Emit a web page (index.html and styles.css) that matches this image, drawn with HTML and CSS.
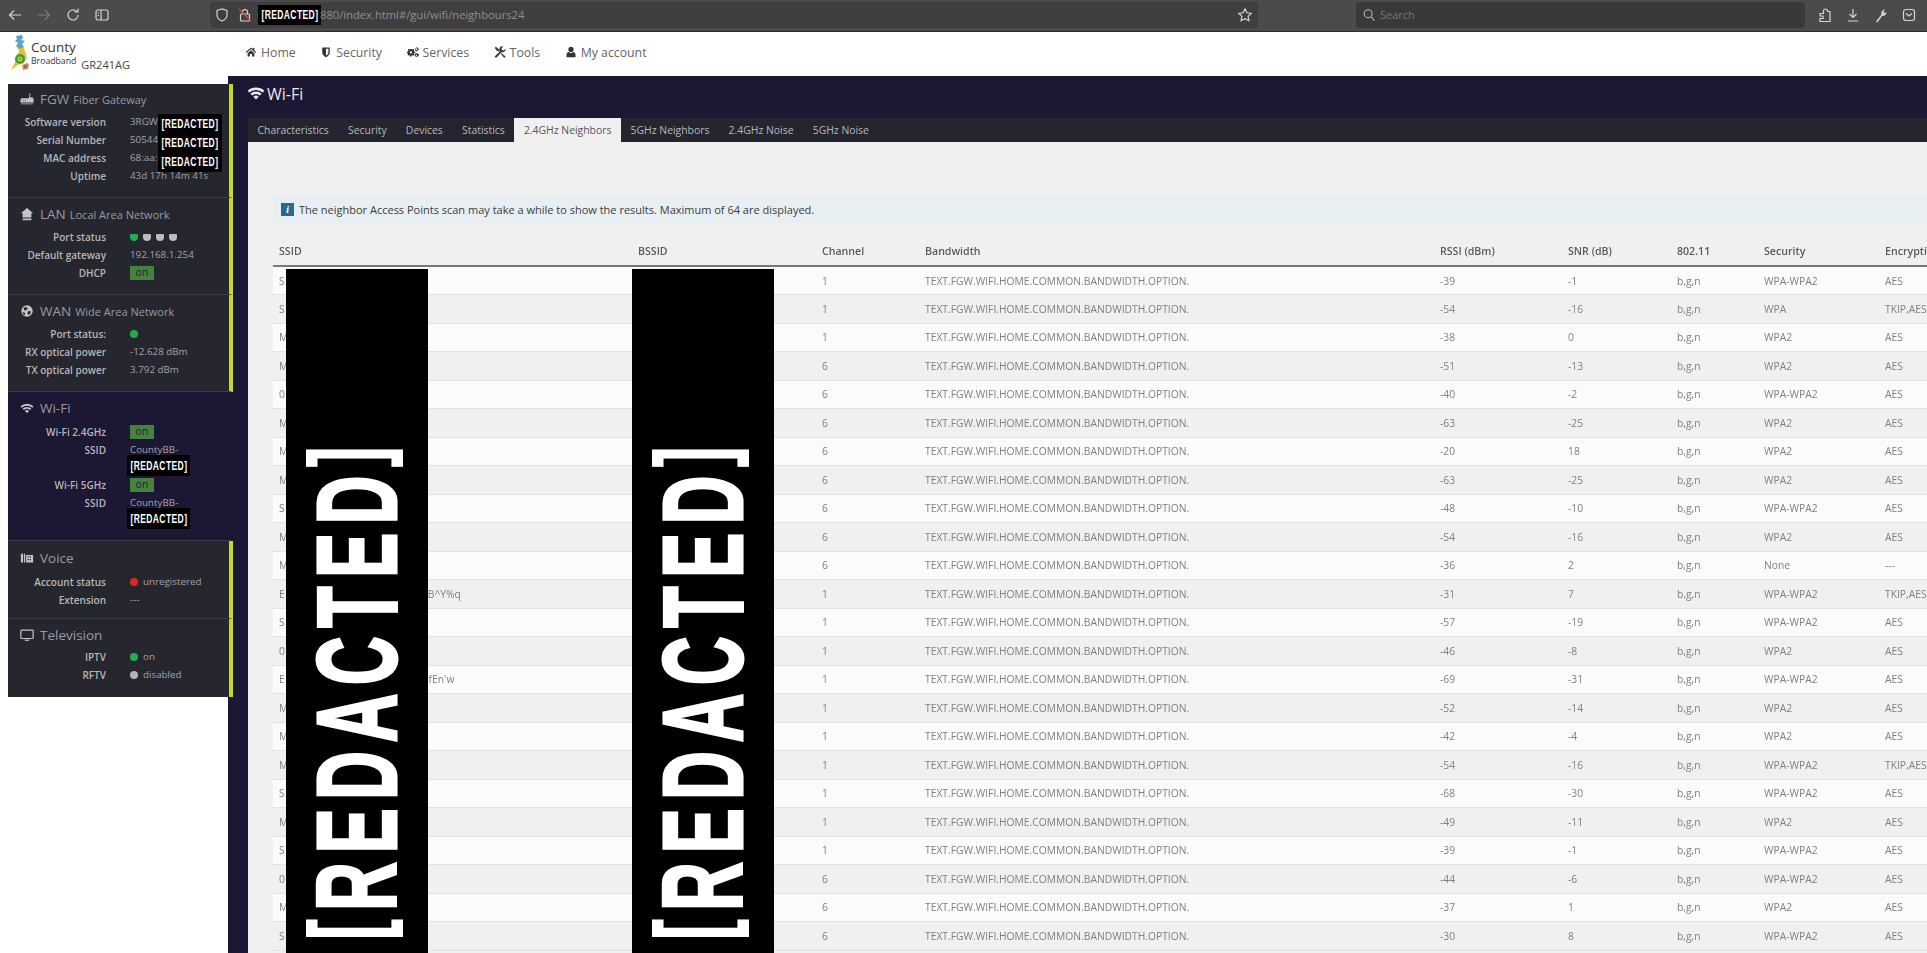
FILE: index.html
```html
<!DOCTYPE html>
<html lang="en">
<head>
<meta charset="utf-8">
<title>Wi-Fi</title>
<link rel="stylesheet" href="styles.css">
</head>
<body>
<header class="chrome">
  <div class="chrome-nav">
    <svg class="ci" viewBox="0 0 16 16"><path d="M14 8H3M7 3.500 2.500 8 7 12.500"/></svg>
    <svg class="ci ci-dim" viewBox="0 0 16 16"><path d="M2 8h11M9 3.500 13.500 8 9 12.500"/></svg>
    <svg class="ci" viewBox="0 0 16 16"><path d="M13 8a5 5 0 1 1-1.600-3.700M13 1.500v3.400H9.600"/></svg>
    <svg class="ci" viewBox="0 0 16 16"><rect x="2" y="3" width="12" height="10" rx="2"/><path d="M7 3v10M3.500 6H5M3.500 8.500H5"/></svg>
  </div>
  <div class="urlbar">
    <svg class="ci ci-url" viewBox="0 0 16 16"><path d="M8 2 3 3.500V8c0 3 2.500 5 5 6 2.500-1 5-3 5-6V3.500z"/></svg>
    <svg class="ci ci-lock" viewBox="0 0 16 16"><rect x="3.500" y="7" width="9" height="7" rx="1"/><path d="M5.500 7V5a2.500 2.500 0 0 1 5 0v2"/><path class="slash" d="M2 2l12 12"/></svg>
    <span class="redact redact-url"><span class="rt">[REDACTED]</span></span>
    <span class="url-text">880/index.html#/gui/wifi/neighbours24</span>
    <svg class="ci ci-star" viewBox="0 0 16 16"><path d="m8 1.800 1.900 4 4.300.6-3.100 3 .8 4.300L8 11.600l-3.900 2.100.8-4.300-3.100-3 4.300-.6z"/></svg>
  </div>
  <div class="searchbar">
    <svg class="ci ci-search" viewBox="0 0 16 16"><circle cx="7" cy="6.500" r="4.500"/><path d="m10.500 10 3.500 4.500"/></svg>
    <span class="search-text">Search</span>
  </div>
  <div class="chrome-tools">
    <svg class="ci" viewBox="0 0 16 16"><path d="M3 6.500h3.500V4a2 2 0 0 1 4 0v.5H13v10H3v-3h3V9H3z"/></svg>
    <svg class="ci" viewBox="0 0 16 16"><path d="M8 2v8.500M4.500 7 8 10.500 11.500 7M3 14h10"/></svg>
    <svg class="ci ci-fill" viewBox="0 0 16 16"><path d="M3 14.500 8.500 7.500c-.8-2.500.8-5 3.500-5l-1.500 2 1 1.500 2-.8c0 2.500-2.200 4.300-4.500 3.800L4.500 15.500z"/></svg>
    <svg class="ci" viewBox="0 0 16 16"><rect x="2.500" y="2.500" width="11" height="11" rx="2.500"/><path d="m5 6.500 3 2.500 3-2.500"/></svg>
  </div>
</header>

<div class="topnav">
  <div class="brand">
    <svg class="logo" viewBox="0 0 20 36">
      <path class="lg-a" d="M8 12l5-1 2 5 2 6-3 6-6 2-7 5 4-8 1-6 3-4z"/>
      <path class="lg-b" d="M6 1l6-1 1 3-2 2 4 1-3 3 2 3-5 2-3-3 2-3-3-2 2-2z"/>
      <circle class="lg-c" cx="10" cy="24" r="5"/>
      <circle class="lg-d" cx="10" cy="24" r="2.500"/>
      <circle class="lg-c" cx="10" cy="24" r="1"/>
      <path class="lg-e" d="M12 30l5-2 2 1-1 5-5 1z"/>
      <path class="lg-f" d="M14 30h3v3h-3z"/>
    </svg>
    <div class="brand-name">
      <span class="brand-county">County</span>
      <span class="brand-bb">Broadband</span>
    </div>
    <span class="brand-model">GR241AG</span>
  </div>
  <nav class="menu">
    <a class="menu-item"><svg class="ni" viewBox="0 0 16 16"><path d="M8 2 1 8l1 1.200L8 4l6 5.200L15 8l-2.500-2.100V2.500h-2v1.700zM3.500 9.500V14h3v-3.500h3V14h3V9.500L8 5.500z"/></svg>Home</a>
    <a class="menu-item"><svg class="ni" viewBox="0 0 16 16"><path d="M3 2h10v6.500c0 3-2.500 5-5 6.500-2.500-1.500-5-3.500-5-6.500zm5 1.800V12.800c1.600-1 3.200-2.500 3.200-4.300V3.800z"/></svg>Security</a>
    <a class="menu-item"><svg class="ni" viewBox="0 0 16 16"><path d="M6 4l1.500.6 1.200-.8 1 1-.7 1.200.5 1.300 1.500.4v1.500l-1.500.3-.5 1.300.7 1.200-1 1-1.200-.7-1.300.5-.3 1.400H4.500l-.4-1.400-1.200-.5-1.200.7-1-1 .7-1.200-.5-1.300L0 9.200V7.700l1.400-.4.500-1.300-.7-1.200 1-1 1.200.8L4.500 4zm-.7 3a1.500 1.500 0 1 0 0 3 1.500 1.500 0 0 0 0-3z"/><path d="M12.500 1l.5 1 1.100.1.500 1 1 .4v1.200l-1 .5-.4 1-.5.9-1.200 0-.9-.6-1-.4V4.500l.3-1.100.6-.8 1-.4zm0 2a1.200 1.200 0 1 0 0 2.400 1.200 1.200 0 0 0 0-2.400zM12.500 9.500l.9.500 1-.1.600 1 1 .5v1.100l-1 .5-.5 1-1.100.2-.9.500-1-.6-.7-.9-.8-.7.100-1.100.8-.7.600-1zm0 2a1 1 0 1 0 0 2 1 1 0 0 0 0-2z"/></svg>Services</a>
    <a class="menu-item"><svg class="ni" viewBox="0 0 16 16"><path d="M15.500 3.800a4 4 0 0 1-5.300 4.300L3.800 15a1.500 1.500 0 0 1-2.600-1.300l6.900-6.600A4 4 0 0 1 12.300.6L10 3l.6 2.300 2.300.6zM1 2.500 2.500 1l4 3.200v1.300l1.300 1.300-1.100 1-1.300-1.300H4.200z"/><path d="m9.600 9.300 5.300 4.200a1.300 1.300 0 0 1-1.800 1.800L8.800 10z"/></svg>Tools</a>
    <a class="menu-item"><svg class="ni" viewBox="0 0 16 16"><circle cx="8" cy="4.500" r="3.500"/><path d="M2 15v-3.500C2 9.500 3.500 8 5 8c1 .8 2 1.200 3 1.200S10 8.800 11 8c1.500 0 3 1.500 3 3.500V15z"/></svg>My account</a>
  </nav>
</div>

<div class="layout">
  <aside class="sidebar">
    <section class="sec sec-first">
      <h3 class="sec-title"><svg class="si" viewBox="0 0 16 16"><path d="M11 1l1 .4-.8 4.600H14l1.500 1.500V12H.5V8.500L2 7h8.200zM3 9v1h1V9zm2.500 0v1h1V9zM1 13h14v1H1z"/></svg><span class="big">FGW</span> <span class="sub">Fiber Gateway</span></h3>
      <div class="kv"><span class="k">Software version</span><span class="v">3RGW</span></div>
      <div class="kv"><span class="k">Serial Number</span><span class="v">50544</span></div>
      <div class="kv"><span class="k">MAC address</span><span class="v">68:aa:</span></div>
      <div class="kv"><span class="k">Uptime</span><span class="v">43d 17h 14m 41s</span></div>
      <div class="redact redact-fgw"><span class="rt">[REDACTED]</span><span class="rt">[REDACTED]</span><span class="rt">[REDACTED]</span></div>
    </section>
    <section class="sec">
      <h3 class="sec-title"><svg class="si" viewBox="0 0 16 16"><path d="M8 1 1 7h2v5h10V7h2zM3 13h10v2H3z"/></svg><span class="big">LAN</span> <span class="sub">Local Area Network</span></h3>
      <div class="kv"><span class="k">Port status</span><span class="v"><i class="port port-on"></i><i class="port"></i><i class="port"></i><i class="port"></i></span></div>
      <div class="kv"><span class="k">Default gateway</span><span class="v">192.168.1.254</span></div>
      <div class="kv"><span class="k">DHCP</span><span class="v"><b class="badge">on</b></span></div>
    </section>
    <section class="sec">
      <h3 class="sec-title"><svg class="si" viewBox="0 0 16 16"><circle cx="8" cy="8" r="6.500"/><path class="globe" d="M4 4.500 7 3.500l2 1.500-2 2-2 .5zM9.500 8l3 .5-1 3-2 1-1-2.500zM3 9l2.500 1 .5 2.500-2-.5z"/></svg><span class="big">WAN</span> <span class="sub">Wide Area Network</span></h3>
      <div class="kv"><span class="k">Port status:</span><span class="v"><i class="dot dot-green"></i></span></div>
      <div class="kv"><span class="k">RX optical power</span><span class="v">-12.628 dBm</span></div>
      <div class="kv"><span class="k">TX optical power</span><span class="v">3.792 dBm</span></div>
    </section>
    <section class="sec sec-active">
      <h3 class="sec-title"><svg class="si" viewBox="0 0 16 16"><path d="M.5 6A11 11 0 0 1 15.500 6L14 7.600a9 9 0 0 0-12 0zM3 8.700a7.300 7.300 0 0 1 10 0L11.500 10.300a5 5 0 0 0-7 0zM5.600 11.300a3.500 3.500 0 0 1 4.800 0L8 13.800z"/></svg><span class="big">Wi-Fi</span></h3>
      <div class="kv"><span class="k">Wi-Fi 2.4GHz</span><span class="v"><b class="badge">on</b></span></div>
      <div class="kv kv-ssid"><span class="k">SSID</span><span class="v">CountyBB-<span class="redact redact-ssid"><span class="rt">[REDACTED]</span></span></span></div>
      <div class="kv"><span class="k">Wi-Fi 5GHz</span><span class="v"><b class="badge">on</b></span></div>
      <div class="kv kv-ssid"><span class="k">SSID</span><span class="v">CountyBB-<span class="redact redact-ssid"><span class="rt">[REDACTED]</span></span></span></div>
    </section>
    <section class="sec sec-voice">
      <h3 class="sec-title"><svg class="si" viewBox="0 0 16 16"><path d="M1 3h2.500v10H1zM4.500 3H6v10H4.500zM7 4.500h8V13H7zM8.500 6v1.500h1.500V6zm2.500 0v1.500h1.500V6zM8.500 9v1.500h1.500V9zm2.500 0v1.500h1.500V9z"/></svg><span class="big big-plain">Voice</span></h3>
      <div class="kv"><span class="k">Account status</span><span class="v"><i class="dot dot-red"></i>unregistered</span></div>
      <div class="kv"><span class="k">Extension</span><span class="v">---</span></div>
    </section>
    <section class="sec sec-tv">
      <h3 class="sec-title"><svg class="si si-tv" viewBox="0 0 16 16"><rect x="1" y="2.500" width="14" height="9.500" rx="1"/><path d="M5.500 14h5"/></svg><span class="big big-plain">Television</span></h3>
      <div class="kv"><span class="k">IPTV</span><span class="v"><i class="dot dot-green"></i>on</span></div>
      <div class="kv"><span class="k">RFTV</span><span class="v"><i class="dot dot-grey"></i>disabled</span></div>
    </section>
  </aside>

  <main class="main">
    <h1 class="page-title"><svg class="ti" viewBox="0 0 16 16"><path d="M.5 6A11 11 0 0 1 15.500 6L14 7.600a9 9 0 0 0-12 0zM3 8.700a7.300 7.300 0 0 1 10 0L11.500 10.300a5 5 0 0 0-7 0zM5.600 11.300a3.500 3.500 0 0 1 4.800 0L8 13.800z"/></svg>Wi-Fi</h1>
    <div class="tabs">
      <a class="tab">Characteristics</a>
      <a class="tab">Security</a>
      <a class="tab">Devices</a>
      <a class="tab">Statistics</a>
      <a class="tab tab-active">2.4GHz Neighbors</a>
      <a class="tab">5GHz Neighbors</a>
      <a class="tab">2.4GHz Noise</a>
      <a class="tab">5GHz Noise</a>
    </div>
    <div class="content">
      <div class="notice"><i class="notice-icon">i</i>The neighbor Access Points scan may take a while to show the results. Maximum of 64 are displayed.</div>
      <div class="table-wrap">
        <table class="grid">
          <colgroup><col class="c1"><col class="c2"><col class="c3"><col class="c4"><col class="c5"><col class="c6"><col class="c7"><col class="c8"><col class="c9"></colgroup>
          <thead><tr><th>SSID</th><th>BSSID</th><th>Channel</th><th>Bandwidth</th><th>RSSI (dBm)</th><th>SNR (dB)</th><th>802.11</th><th>Security</th><th>Encryption</th></tr></thead>
          <tbody>
            <tr><td>S</td><td></td><td>1</td><td>TEXT.FGW.WIFI.HOME.COMMON.BANDWIDTH.OPTION.</td><td>-39</td><td>-1</td><td>b,g,n</td><td>WPA-WPA2</td><td>AES</td></tr>
            <tr><td>S</td><td></td><td>1</td><td>TEXT.FGW.WIFI.HOME.COMMON.BANDWIDTH.OPTION.</td><td>-54</td><td>-16</td><td>b,g,n</td><td>WPA</td><td>TKIP,AES</td></tr>
            <tr><td>M</td><td></td><td>1</td><td>TEXT.FGW.WIFI.HOME.COMMON.BANDWIDTH.OPTION.</td><td>-38</td><td>0</td><td>b,g,n</td><td>WPA2</td><td>AES</td></tr>
            <tr><td>M</td><td></td><td>6</td><td>TEXT.FGW.WIFI.HOME.COMMON.BANDWIDTH.OPTION.</td><td>-51</td><td>-13</td><td>b,g,n</td><td>WPA2</td><td>AES</td></tr>
            <tr><td>0</td><td></td><td>6</td><td>TEXT.FGW.WIFI.HOME.COMMON.BANDWIDTH.OPTION.</td><td>-40</td><td>-2</td><td>b,g,n</td><td>WPA-WPA2</td><td>AES</td></tr>
            <tr><td>M</td><td></td><td>6</td><td>TEXT.FGW.WIFI.HOME.COMMON.BANDWIDTH.OPTION.</td><td>-63</td><td>-25</td><td>b,g,n</td><td>WPA2</td><td>AES</td></tr>
            <tr><td>M</td><td></td><td>6</td><td>TEXT.FGW.WIFI.HOME.COMMON.BANDWIDTH.OPTION.</td><td>-20</td><td>18</td><td>b,g,n</td><td>WPA2</td><td>AES</td></tr>
            <tr><td>M</td><td></td><td>6</td><td>TEXT.FGW.WIFI.HOME.COMMON.BANDWIDTH.OPTION.</td><td>-63</td><td>-25</td><td>b,g,n</td><td>WPA2</td><td>AES</td></tr>
            <tr><td>S</td><td></td><td>6</td><td>TEXT.FGW.WIFI.HOME.COMMON.BANDWIDTH.OPTION.</td><td>-48</td><td>-10</td><td>b,g,n</td><td>WPA-WPA2</td><td>AES</td></tr>
            <tr><td>M</td><td></td><td>6</td><td>TEXT.FGW.WIFI.HOME.COMMON.BANDWIDTH.OPTION.</td><td>-54</td><td>-16</td><td>b,g,n</td><td>WPA2</td><td>AES</td></tr>
            <tr><td>M</td><td></td><td>6</td><td>TEXT.FGW.WIFI.HOME.COMMON.BANDWIDTH.OPTION.</td><td>-36</td><td>2</td><td>b,g,n</td><td>None</td><td>---</td></tr>
            <tr><td>E<span class="gap gap-a"></span>B^Y%q</td><td></td><td>1</td><td>TEXT.FGW.WIFI.HOME.COMMON.BANDWIDTH.OPTION.</td><td>-31</td><td>7</td><td>b,g,n</td><td>WPA-WPA2</td><td>TKIP,AES</td></tr>
            <tr><td>S</td><td></td><td>1</td><td>TEXT.FGW.WIFI.HOME.COMMON.BANDWIDTH.OPTION.</td><td>-57</td><td>-19</td><td>b,g,n</td><td>WPA-WPA2</td><td>AES</td></tr>
            <tr><td>0</td><td></td><td>1</td><td>TEXT.FGW.WIFI.HOME.COMMON.BANDWIDTH.OPTION.</td><td>-46</td><td>-8</td><td>b,g,n</td><td>WPA2</td><td>AES</td></tr>
            <tr><td>E<span class="gap gap-b"></span>$fEn'w</td><td></td><td>1</td><td>TEXT.FGW.WIFI.HOME.COMMON.BANDWIDTH.OPTION.</td><td>-69</td><td>-31</td><td>b,g,n</td><td>WPA-WPA2</td><td>AES</td></tr>
            <tr><td>M</td><td></td><td>1</td><td>TEXT.FGW.WIFI.HOME.COMMON.BANDWIDTH.OPTION.</td><td>-52</td><td>-14</td><td>b,g,n</td><td>WPA2</td><td>AES</td></tr>
            <tr><td>M</td><td></td><td>1</td><td>TEXT.FGW.WIFI.HOME.COMMON.BANDWIDTH.OPTION.</td><td>-42</td><td>-4</td><td>b,g,n</td><td>WPA2</td><td>AES</td></tr>
            <tr><td>M</td><td></td><td>1</td><td>TEXT.FGW.WIFI.HOME.COMMON.BANDWIDTH.OPTION.</td><td>-54</td><td>-16</td><td>b,g,n</td><td>WPA-WPA2</td><td>TKIP,AES</td></tr>
            <tr><td>S</td><td></td><td>1</td><td>TEXT.FGW.WIFI.HOME.COMMON.BANDWIDTH.OPTION.</td><td>-68</td><td>-30</td><td>b,g,n</td><td>WPA-WPA2</td><td>AES</td></tr>
            <tr><td>M</td><td></td><td>1</td><td>TEXT.FGW.WIFI.HOME.COMMON.BANDWIDTH.OPTION.</td><td>-49</td><td>-11</td><td>b,g,n</td><td>WPA2</td><td>AES</td></tr>
            <tr><td>S</td><td></td><td>1</td><td>TEXT.FGW.WIFI.HOME.COMMON.BANDWIDTH.OPTION.</td><td>-39</td><td>-1</td><td>b,g,n</td><td>WPA-WPA2</td><td>AES</td></tr>
            <tr><td>0</td><td></td><td>6</td><td>TEXT.FGW.WIFI.HOME.COMMON.BANDWIDTH.OPTION.</td><td>-44</td><td>-6</td><td>b,g,n</td><td>WPA-WPA2</td><td>AES</td></tr>
            <tr><td>M</td><td></td><td>6</td><td>TEXT.FGW.WIFI.HOME.COMMON.BANDWIDTH.OPTION.</td><td>-37</td><td>1</td><td>b,g,n</td><td>WPA2</td><td>AES</td></tr>
            <tr><td>S</td><td></td><td>6</td><td>TEXT.FGW.WIFI.HOME.COMMON.BANDWIDTH.OPTION.</td><td>-30</td><td>8</td><td>b,g,n</td><td>WPA-WPA2</td><td>AES</td></tr>
          </tbody>
        </table>
        <div class="bar bar-ssid"><span class="bar-text"><span class="br">[</span>REDACTED<span class="br">]</span></span></div>
        <div class="bar bar-bssid"><span class="bar-text"><span class="br">[</span>REDACTED<span class="br">]</span></span></div>
      </div>
    </div>
  </main>
</div>
</body>
</html>
```

FILE: styles.css
```css
* { box-sizing: border-box; }
html, body { margin: 0; padding: 0; height: 953px; overflow: hidden; background: #fff; }
body { font-family: "Open Sans", "Noto Sans", sans-serif; font-size: 11px; color: #555; }

/* browser chrome */
.chrome { height: 32px; background: #4b4b4b; border-bottom: 1px solid #2e2e2e; display: flex; align-items: flex-start; padding-top: 2px; position: relative; }
.chrome-nav { width: 210px; height: 26px; display: flex; align-items: center; gap: 13px; padding-left: 7px; flex: none; }
.ci { width: 16px; height: 16px; fill: none; stroke: #d4d4d4; stroke-width: 1.200; flex: none; }
.ci-dim { stroke: #7c7c7c; }
.ci-fill { fill: #d4d4d4; stroke: none; }
.urlbar { width: 1048px; height: 26px; background: #3f3f3f; border-radius: 4px; display: flex; align-items: center; padding-left: 4px; flex: none; }
.ci-lock { margin-left: 7px; }
.slash { stroke: #e0433a; }
.redact { background: #000; color: #fff; font-family: "Liberation Sans", sans-serif; font-weight: 700; white-space: nowrap; display: flex; align-items: center; justify-content: center; overflow: hidden; }
.rt { display: block; flex: none; font-size: 12.500px; line-height: 16px; letter-spacing: .6px; transform: scaleX(.68); }
.redact-url { width: 63px; height: 20px; margin-left: 5px; flex: none; }
.url-text { color: #8f8f8f; font-size: 11.200px; margin: -2px 0 0 -1px; flex: 1; }
.ci-star { margin-right: 5px; }
.searchbar { width: 449px; height: 26px; margin-left: 98px; background: #393939; border-radius: 4px; display: flex; align-items: center; gap: 4px; padding-left: 6px; color: #777; font-size: 11px; flex: none; }
.search-text { margin-top: -2px; }
.ci-search { width: 14px; height: 14px; stroke: #bbb; }
.chrome-tools { height: 26px; display: flex; align-items: center; gap: 12px; margin-left: 12px; }

/* top nav */
.topnav { height: 44px; background: #fff; display: flex; position: relative; }
.brand { width: 228px; flex: none; display: flex; position: relative; padding: 3px 0 0 10px; }
.logo { width: 20px; height: 36px; flex: none; }
.lg-a { fill: #e6c22a; }
.lg-b { fill: #5aa4c8; }
.lg-c { fill: #3f9c4a; }
.lg-d { fill: #c2d62a; }
.lg-e { fill: #d98f3a; }
.lg-f { fill: #7a6fa8; }
.brand-name { display: flex; flex-direction: column; margin-left: 1px; color: #33333d; padding-top: 5px; }
.brand-county { font-size: 13.500px; line-height: 15px; }
.brand-bb { font-size: 8.700px; line-height: 12px; }
.brand-model { font-size: 11px; color: #444; margin: 23px 0 0 5px; line-height: 14px; }
.menu { display: flex; align-items: center; margin-left: 17px; gap: 24.500px; font-size: 12.300px; font-weight: 400; color: #666; height: 40px; }
.menu-item { display: flex; align-items: center; gap: 4px; }
.ni { width: 12px; height: 12px; fill: #33333d; }

/* layout */
.layout { display: flex; height: 877px; }
.sidebar { width: 233px; margin-right: -5px; padding: 8px 0 0 8px; flex: none; position: relative; z-index: 1; align-self: flex-start; }
.sec { background: #26262f; border-right: 4px solid #c3da22; border-bottom: 1px solid #3c3c46; padding: 5px 0 12px; position: relative; color: #bbb; }
.sec-first { padding-top: 4px; }
.sec-active { background: #1c1733; border-right-color: #1c1733; padding-bottom: 11px; }
.sec-active .sec-title { margin-bottom: 4px; }
.sec-voice { padding: 6px 0 9px; }
.sec-voice .sec-title { margin-bottom: 4px; }
.sec-tv { padding-bottom: 13px; }
.sec-tv .sec-title { margin-bottom: 2px; }
.sec:last-child { border-bottom: 0; }
.sec-title { margin: 0 0 3px; height: 22px; display: flex; align-items: center; font-weight: 400; font-size: 11px; color: #9a9aa2; white-space: pre; padding-left: 12px; }
.si { width: 14px; height: 14px; fill: #c4c4c8; flex: none; margin-right: 6px; }
.si-tv { fill: none; stroke: #c4c4c8; stroke-width: 1.400; }
.globe { fill: #26262f; }
.big { font-size: 13.500px; margin-right: 4px; }
.big-plain { margin-right: 0; }
.kv { display: grid; grid-template-columns: 98px 1fr; column-gap: 24px; height: 18px; line-height: 18px; font-size: 10px; }
.kv-ssid { height: 35px; }
.k { text-align: right; font-weight: 600; color: #b6b6b8; white-space: nowrap; }
.v { color: #a2a2a6; white-space: nowrap; display: flex; align-items: center; height: 18px; font-size: 9.800px; }
.kv-ssid .v { height: auto; display: block; position: relative; }
.redact-fgw { position: absolute; left: 150px; top: 30px; width: 64px; height: 58px; flex-direction: column; justify-content: space-around; }
.redact-ssid { position: absolute; left: -3px; top: 14px; width: 63px; height: 21px; }
.badge { display: inline-block; width: 24px; height: 14px; line-height: 13px; background: #46823f; color: #23232b; font-weight: 400; text-align: center; font-size: 10.500px; }
.dot { display: inline-block; width: 8px; height: 8px; border-radius: 50%; margin-right: 5px; }
.dot-green { background: #1fae4e; }
.dot-red { background: #e0261f; }
.dot-grey { background: #b5b5b5; }
.port { display: inline-block; width: 8px; height: 7px; background: #bdbdbd; margin-right: 5px; border-radius: 1px 1px 4px 4px; }
.port-on { background: #1fae4e; }

/* main */
.main { flex: 1; min-width: 0; background: #1c1733; padding-left: 20px; overflow: hidden; }
.page-title { margin: 0; height: 42px; display: flex; align-items: center; font-size: 16px; font-weight: 400; color: #e8e8ec; padding: 0 0 6px 0; }
.ti { width: 18px; height: 18px; fill: #e8e8ec; margin: -3px 2px 0 -1px; }
.tabs { display: flex; height: 24px; background: #25252f; align-items: stretch; }
.tab { padding: 0 9.600px; line-height: 24px; color: #b8b8bc; font-size: 10.400px; white-space: nowrap; }
.tab:first-child { padding-left: 9.500px; }
.tab-active { background: #f0f0f0; color: #555; }
.content { background: #f0f0f0; height: 811px; padding: 54px 0 0 25px; overflow: hidden; }
.notice { height: 27px; width: 1700px; background: #e8eff3; display: flex; align-items: center; padding-left: 8px; color: #3c3c3c; font-size: 11px; }
.notice-icon { width: 13px; height: 13px; line-height: 13px; background: #2a6a90; color: #fff; font-family: "Liberation Serif", serif; font-weight: 700; font-size: 11px; text-align: center; margin-right: 5px; }
.table-wrap { position: relative; width: 1700px; height: 730px; overflow: hidden; will-change: opacity; }
.grid { border-collapse: collapse; table-layout: fixed; width: 1706px; }
.c1 { width: 359px; } .c2 { width: 184px; } .c3 { width: 103px; } .c4 { width: 515px; } .c5 { width: 128px; } .c6 { width: 109px; } .c7 { width: 87px; } .c8 { width: 121px; } .c9 { width: 100px; }
.grid th { height: 43px; padding: 13px 6px 0; text-align: left; font-weight: 600; color: #5a5a5a; border-bottom: 2px solid #777; white-space: nowrap; font-size: 10.600px; }
.grid td { height: 28.500px; padding: 0 6px; color: #808080; border-bottom: 1px solid #e2e2e2; white-space: nowrap; overflow: hidden; font-size: 10.300px; }
.grid tbody tr:nth-child(odd) td { background: #fbfbfb; }
.gap { display: inline-block; }
.gap-a { width: 143px; }
.gap-b { width: 138px; }
.bar { position: absolute; top: 46px; bottom: 0; width: 142px; background: #000; overflow: hidden; }
.bar-ssid { left: 13px; }
.bar-bssid { left: 359px; }
.bar-text { position: absolute; left: 71px; top: 420px; color: #fff; font-family: "Liberation Sans", sans-serif; font-weight: 700; font-size: 113px; line-height: 1; letter-spacing: 14px; white-space: nowrap; -webkit-text-stroke: 3px #fff; transform: translate(-50%, -50%) rotate(-90deg) scaleX(.6); }
.br { display: inline-block; font-size: 102px; transform: translateY(-15px); -webkit-text-stroke: 2px #fff; }
```
